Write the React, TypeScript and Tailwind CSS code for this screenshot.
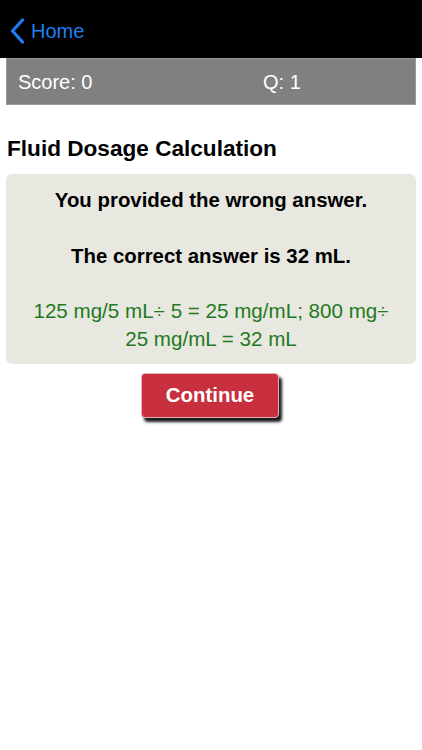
import React from "react";

export default function App() {
  return (
    <div className="w-[422px] h-[750px] bg-white" style={{ fontFamily: '"Liberation Sans", Arial, sans-serif' }}>
      <div className="h-[58px] bg-black flex items-center pl-[10px] pt-[4px]">
        <svg width="15" height="26" viewBox="0 0 15 26" className="mr-[6px]">
          <path d="M12.5 2 L2.5 13 L12.5 24" fill="none" stroke="#1e7ff0" strokeWidth="3.2" strokeLinecap="round" strokeLinejoin="round" />
        </svg>
        <span className="text-[20px] text-[#1e7ff0]">Home</span>
      </div>
      <div className="mx-[6px] h-[47px] bg-[#808080] border border-[#9a9a9a] flex items-center text-white text-[20px]">
        <span className="pl-[11px] w-[256px]">Score: 0</span>
        <span>Q: 1</span>
      </div>
      <div className="px-[7px] pt-[29px] pb-[10px] text-[22.6px] font-bold text-black leading-[30px]">
        Fluid Dosage Calculation
      </div>
      <div className="mx-[6px] h-[190px] bg-[#e8e8e0] rounded-[6px] flex flex-col items-center text-center pt-[13px]">
        <div className="text-[20.4px] font-bold text-black leading-[26px]">You provided the wrong answer.</div>
        <div className="text-[20.4px] font-bold text-black leading-[26px] mt-[30px]">The correct answer is 32 mL.</div>
        <div className="text-[20.6px] text-[#1f7a1f] leading-[28px] mt-[28px] px-[10px]">
          125 mg/5 mL÷ 5 = 25 mg/mL; 800 mg÷<br />25 mg/mL = 32 mL
        </div>
      </div>
      <div className="flex justify-center pt-[9px] pr-[2px]">
        <button className="w-[138px] h-[45px] bg-[#c8303f] border border-[#e8b0b6] rounded-[4px] text-white text-[20.4px] font-bold shadow-[3px_4px_3px_rgba(0,0,0,0.9)]">
          Continue
        </button>
      </div>
    </div>
  );
}
